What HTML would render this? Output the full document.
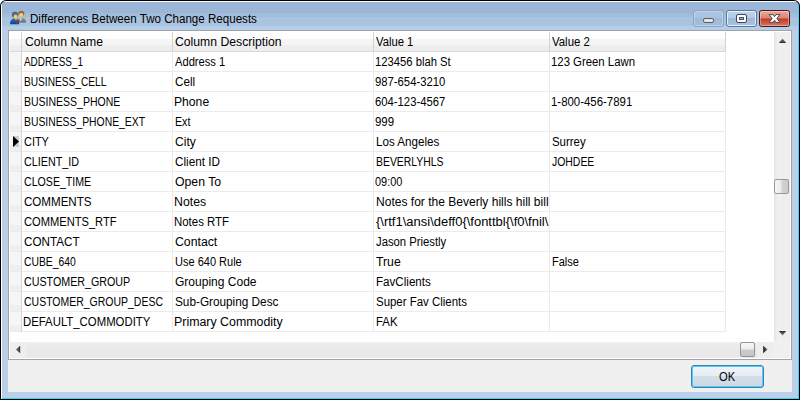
<!DOCTYPE html>
<html><head><meta charset="utf-8"><title>Differences Between Two Change Requests</title>
<style>
html,body{margin:0;padding:0;background:#fff;overflow:hidden}
body{width:800px;height:400px;position:relative;font-family:"Liberation Sans",sans-serif;font-size:12px;color:#000}
div,span,svg{position:absolute;box-sizing:border-box}
#win{left:0;top:0;width:800px;height:400px;background:#000;border-radius:6px 6px 0 0}
#rim{left:1px;top:1px;width:798px;height:398px;border-radius:5px 5px 0 0;background:linear-gradient(90deg,#fff 0,#fff 1px,rgba(255,255,255,0) 1px),linear-gradient(180deg,#fbfdff 0,#fbfdff 1px,rgba(255,255,255,0) 1px),linear-gradient(270deg,#3fd0ff 0,#3fd0ff 1px,rgba(255,255,255,0) 1px),linear-gradient(0deg,#2fd8f4 0,#2fd8f4 1px,rgba(255,255,255,0) 1px),linear-gradient(180deg,#9bb6d6 0,#9bb6d6 12px,#a2bcda 12px,#a2bcda 16px,#aac4e0 16px,#aac4e0 25px,#b4cde8 25px,#b4cde8 29px,#bad0ea 29px)}
#panel{left:8px;top:30px;width:784px;height:362px;background:#f0f0f0}
#grid{left:8px;top:30px;width:784px;height:330px;background:#fff;border:1px solid #a3a3a3}
.c{height:20px;overflow:hidden}
.c span{top:0;line-height:20px;white-space:nowrap;transform-origin:0 50%}
.hdr{left:10px;top:32px;width:716px;height:19px;background:linear-gradient(180deg,#ffffff 0,#fdfdfd 7px,#f5f5f6 7px,#f4f4f5 13px,#eeeeee 13px,#ededed 19px)}
.hline{left:10px;top:51px;width:716px;height:1px;background:#dadada}
.hv{top:32px;width:1px;height:19px;background:#d2d2d2}
.v{top:52px;width:1px;height:280px;background:#ebebeb}
.hl{left:10px;width:716px;height:1px;background:#ebebeb}
.ind{left:10px;width:11px;height:19px;background:linear-gradient(180deg,#f6f6f7 0,#f6f6f7 13px,#efefef 13px)}
</style></head><body>
<div id="win"></div><div id="rim"></div>
<div id="panel"></div>
<div id="grid"></div>
<div class="hdr"></div><div class="hline"></div>
<div class="ind" style="top:52px"></div><div class="hl" style="top:71px"></div>
<div class="ind" style="top:72px"></div><div class="hl" style="top:91px"></div>
<div class="ind" style="top:92px"></div><div class="hl" style="top:111px"></div>
<div class="ind" style="top:112px"></div><div class="hl" style="top:131px"></div>
<div class="ind" style="top:132px"></div><div class="hl" style="top:151px"></div>
<div class="ind" style="top:152px"></div><div class="hl" style="top:171px"></div>
<div class="ind" style="top:172px"></div><div class="hl" style="top:191px"></div>
<div class="ind" style="top:192px"></div><div class="hl" style="top:211px"></div>
<div class="ind" style="top:212px"></div><div class="hl" style="top:231px"></div>
<div class="ind" style="top:232px"></div><div class="hl" style="top:251px"></div>
<div class="ind" style="top:252px"></div><div class="hl" style="top:271px"></div>
<div class="ind" style="top:272px"></div><div class="hl" style="top:291px"></div>
<div class="ind" style="top:292px"></div><div class="hl" style="top:311px"></div>
<div class="ind" style="top:312px"></div><div class="hl" style="top:331px"></div>
<div class="hv" style="left:21px"></div><div class="hv" style="left:172px"></div><div class="hv" style="left:373px"></div><div class="hv" style="left:549px"></div><div class="hv" style="left:725px"></div>
<div class="v" style="left:21px;background:#d6d6d6"></div><div class="v" style="left:172px"></div><div class="v" style="left:373px"></div><div class="v" style="left:549px"></div><div class="v" style="left:725px"></div>
<!-- row indicator arrow -->
<div style="left:13px;top:136px;width:6px;height:11px;background:#cdcdcd"></div>
<svg style="left:13px;top:136px" width="7" height="11" viewBox="0 0 7 11"><path d="M0 0 L6 5.5 L0 11 Z" fill="#000"/></svg>
<!-- vertical scrollbar -->
<div style="left:774px;top:32px;width:16px;height:309px;background:linear-gradient(90deg,#e3e3e3 0,#ededed 2px,#f1f1f1 7px,#ededed 8px,#f0f0f0 14px,#e9e9e9 16px)"></div>
<svg style="left:778px;top:38px" width="9" height="6" viewBox="0 0 9 6"><defs><linearGradient id="ga" x1="0" y1="0" x2="0" y2="1"><stop offset="0" stop-color="#8a8a8a"/><stop offset="1" stop-color="#2a2a2a"/></linearGradient><linearGradient id="gb" x1="0" y1="0" x2="0" y2="1"><stop offset="0" stop-color="#2a2a2a"/><stop offset="1" stop-color="#8a8a8a"/></linearGradient><linearGradient id="gc" x1="0" y1="0" x2="1" y2="0"><stop offset="0" stop-color="#8a8a8a"/><stop offset="1" stop-color="#2a2a2a"/></linearGradient><linearGradient id="gd" x1="0" y1="0" x2="1" y2="0"><stop offset="0" stop-color="#1a1a1a"/><stop offset="1" stop-color="#777"/></linearGradient></defs><path d="M0.8 5 L4.5 0.5 L8.2 5 Z" fill="url(#ga)"/></svg>
<svg style="left:778px;top:330px" width="9" height="6" viewBox="0 0 9 6"><path d="M0.8 1 L4.5 5.4 L8.2 1 Z" fill="url(#gb)"/></svg>
<div style="left:774px;top:179px;width:15px;height:15px;border:1px solid #989898;border-radius:2px;background:linear-gradient(90deg,#f6f6f6 0,#ececec 6px,#d2d2d2 7px,#cbcbcb 13px)"></div>
<!-- horizontal scrollbar -->
<div style="left:10px;top:342px;width:764px;height:16px;background:linear-gradient(180deg,#f1f1f1 0,#ebebeb 3px,#e8e8e8 14px,#ececec 16px)"></div>
<div style="left:10px;top:342px;width:17px;height:16px;background:#eeeeee"></div>
<div style="left:757px;top:342px;width:17px;height:16px;background:#eeeeee"></div>
<div style="left:774px;top:341px;width:16px;height:17px;background:#f0f0f0"></div>
<svg style="left:15px;top:345px" width="6" height="9" viewBox="0 0 6 9"><path d="M5.2 0.8 L0.8 4.5 L5.2 8.2 Z" fill="url(#gc)"/></svg>
<svg style="left:763px;top:345px" width="6" height="9" viewBox="0 0 6 9"><path d="M0.2 0.8 L4.6 4.5 L0.2 8.2 Z" fill="url(#gd)"/></svg>
<div style="left:740px;top:342px;width:15px;height:15px;border:1px solid #8f959b;border-radius:2px;background:linear-gradient(180deg,#f6f6f6 0,#ececec 6px,#cdcdcd 7px,#c4c4c4 13px)"></div>
<!-- OK button -->
<div style="left:691px;top:365px;width:73px;height:23px;border:1px solid #3c7fb1;border-radius:3px;background:linear-gradient(180deg,#eef3f7 0,#e6edf3 10px,#d3dee8 10px,#cbd8e4 21px);box-shadow:inset 0 0 0 1px #4fcdf6"></div>
<!-- caption buttons -->
<div style="left:693px;top:10px;width:31px;height:17px;border:1px solid #8aa6c8;border-radius:3px;background:linear-gradient(180deg,#adc5e2 0,#a9c2e0 7px,#9db8d8 7px,#a5bfdd 15px);box-shadow:inset 0 0 0 1px rgba(255,255,255,.25)"></div>
<div style="left:703px;top:18px;width:11px;height:5px;border:1px solid #5d5d5d;border-radius:2px;background:#e6e6e6"></div>
<div style="left:726px;top:10px;width:31px;height:17px;border:1px solid #58769f;border-radius:3px;background:linear-gradient(180deg,#bdd3ec 0,#b3cbe7 7px,#9cb8d9 7px,#a9c3e1 15px);box-shadow:inset 0 0 0 1px rgba(255,255,255,.7)"></div>
<div style="left:736px;top:14px;width:11px;height:9px;border:1px solid #45455a;border-radius:2px;background:#fbfbfb"></div>
<div style="left:739px;top:17px;width:5px;height:3px;border:1px solid #45556d;background:#8fb2d8"></div>
<div style="left:759px;top:10px;width:31px;height:17px;border:1px solid #4b1622;border-radius:2.5px;background:linear-gradient(180deg,#e9a99a 0,#dc8571 7px,#c13c22 8px,#d4775e 15px);box-shadow:inset 0 0 0 1px rgba(255,255,255,.35)"></div>
<svg style="left:768px;top:13px" width="13" height="11" viewBox="0 0 13 11"><path d="M1.2 1.6 L5 1.6 L6.5 3.7 L8 1.6 L11.8 1.6 L8.9 5.5 L11.8 9.4 L8 9.4 L6.5 7.3 L5 9.4 L1.2 9.4 L4.1 5.5 Z" fill="#fff" stroke="#4a4a55" stroke-width="1" stroke-linejoin="round"/></svg>
<!-- icon -->
<svg style="left:9px;top:10px" width="18" height="16" viewBox="0 0 18 16">
 <defs>
  <linearGradient id="ib" x1="0" y1="0" x2="0" y2="1"><stop offset="0" stop-color="#2f78bd"/><stop offset="1" stop-color="#0f437c"/></linearGradient>
  <linearGradient id="ig" x1="0" y1="0" x2="0" y2="1"><stop offset="0" stop-color="#a3a6aa"/><stop offset="1" stop-color="#5c5f63"/></linearGradient>
  <radialGradient id="if" cx="0.45" cy="0.4" r="0.7"><stop offset="0" stop-color="#ffe08a"/><stop offset="1" stop-color="#e2a23a"/></radialGradient>
 </defs>
 <path d="M9.9 12.6 L9.9 9 C10.8 8.1 12 7.8 13.2 7.8 C15.6 7.8 17 9.4 17 12.6 Z" fill="url(#ig)"/>
 <path d="M11 8 L12.6 8 L12.2 11.2 L11.2 11.2 Z" fill="#b9d6f2"/>
 <ellipse cx="12.3" cy="3.6" rx="3" ry="2.7" fill="#8a6a3e"/>
 <ellipse cx="12.3" cy="5.3" rx="2.2" ry="2.6" fill="url(#if)"/>
 <path d="M9.6 4 C9.8 1.6 11 0.9 12.3 0.9 C13.8 0.9 15 1.8 15.2 4 C14.2 3 13.3 2.8 12.3 2.8 C11.3 2.8 10.5 3 9.6 4 Z" fill="#8a6a3e"/>
 <path d="M1 14.3 C1 11 2.4 8.8 5 8.2 L8.6 8.2 C9.7 9 10.1 11 10.1 14.3 Z" fill="url(#ib)"/>
 <path d="M5.6 8.3 L7.2 10.2 L8.6 8.3 Z" fill="#f4f6f8"/>
 <path d="M7 9.6 L7.6 9.6 L8.1 13.6 L7.5 14.3 L6.9 13.5 Z" fill="#c7281f"/>
 <ellipse cx="6" cy="4.8" rx="3.1" ry="3" fill="#485b7c"/>
 <ellipse cx="6.6" cy="6.8" rx="2.1" ry="2.4" fill="url(#if)"/>
 <path d="M3.6 5.6 C3.6 3.6 5 3 6.2 3 C7.8 3 9 3.8 9 5.6 C8.2 4.6 7.4 4.4 6.4 4.4 C5.4 4.4 4.4 4.6 3.6 5.6 Z" fill="#5d7193"/>
</svg>

<div class="c" style="left:22px;top:32px;width:150px"><span id="h0" style="left:2.93px;transform:scaleX(1.0176)">Column Name</span></div>
<div class="c" style="left:173px;top:32px;width:200px"><span id="h1" style="left:1.88px;transform:scaleX(1.0174)">Column Description</span></div>
<div class="c" style="left:374px;top:32px;width:175px"><span id="h2" style="left:1.92px;transform:scaleX(0.9391)">Value 1</span></div>
<div class="c" style="left:550px;top:32px;width:175px"><span id="h3" style="left:2.46px;transform:scaleX(0.9517)">Value 2</span></div>
<div class="c" style="left:22px;top:52px;width:150px"><span id="r0c0" style="left:2.35px;transform:scaleX(0.8262)">ADDRESS_1</span></div>
<div class="c" style="left:173px;top:52px;width:200px"><span id="r0c1" style="left:2.22px;transform:scaleX(0.9283)">Address 1</span></div>
<div class="c" style="left:374px;top:52px;width:175px"><span id="r0c2" style="left:0.56px;transform:scaleX(0.9375)">123456 blah St</span></div>
<div class="c" style="left:550px;top:52px;width:175px"><span id="r0c3" style="left:0.92px;transform:scaleX(0.9462)">123 Green Lawn</span></div>
<div class="c" style="left:22px;top:72px;width:150px"><span id="r1c0" style="left:2.09px;transform:scaleX(0.8457)">BUSINESS_CELL</span></div>
<div class="c" style="left:173px;top:72px;width:200px"><span id="r1c1" style="left:1.88px;transform:scaleX(0.9757)">Cell</span></div>
<div class="c" style="left:374px;top:72px;width:175px"><span id="r1c2" style="left:1.09px;transform:scaleX(0.9405)">987-654-3210</span></div>
<div class="c" style="left:22px;top:92px;width:150px"><span id="r2c0" style="left:2.18px;transform:scaleX(0.8748)">BUSINESS_PHONE</span></div>
<div class="c" style="left:173px;top:92px;width:200px"><span id="r2c1" style="left:1.20px;transform:scaleX(1.0128)">Phone</span></div>
<div class="c" style="left:374px;top:92px;width:175px"><span id="r2c2" style="left:1.09px;transform:scaleX(0.9405)">604-123-4567</span></div>
<div class="c" style="left:550px;top:92px;width:175px"><span id="r2c3" style="left:0.91px;transform:scaleX(0.9511)">1-800-456-7891</span></div>
<div class="c" style="left:22px;top:112px;width:150px"><span id="r3c0" style="left:2.09px;transform:scaleX(0.8640)">BUSINESS_PHONE_EXT</span></div>
<div class="c" style="left:173px;top:112px;width:200px"><span id="r3c1" style="left:2.14px;transform:scaleX(0.8862)">Ext</span></div>
<div class="c" style="left:374px;top:112px;width:175px"><span id="r3c2" style="left:1.06px;transform:scaleX(0.9529)">999</span></div>
<div class="c" style="left:22px;top:132px;width:150px"><span id="r4c0" style="left:1.90px;transform:scaleX(0.9103)">CITY</span></div>
<div class="c" style="left:173px;top:132px;width:200px"><span id="r4c1" style="left:1.88px;transform:scaleX(1.0086)">City</span></div>
<div class="c" style="left:374px;top:132px;width:175px"><span id="r4c2" style="left:1.63px;transform:scaleX(0.9699)">Los Angeles</span></div>
<div class="c" style="left:550px;top:132px;width:175px"><span id="r4c3" style="left:1.90px;transform:scaleX(0.9509)">Surrey</span></div>
<div class="c" style="left:22px;top:152px;width:150px"><span id="r5c0" style="left:1.90px;transform:scaleX(0.8961)">CLIENT_ID</span></div>
<div class="c" style="left:173px;top:152px;width:200px"><span id="r5c1" style="left:1.89px;transform:scaleX(0.9770)">Client ID</span></div>
<div class="c" style="left:374px;top:152px;width:175px"><span id="r5c2" style="left:1.63px;transform:scaleX(0.8675)">BEVERLYHLS</span></div>
<div class="c" style="left:550px;top:152px;width:175px"><span id="r5c3" style="left:2.01px;transform:scaleX(0.8688)">JOHDEE</span></div>
<div class="c" style="left:22px;top:172px;width:150px"><span id="r6c0" style="left:1.90px;transform:scaleX(0.8837)">CLOSE_TIME</span></div>
<div class="c" style="left:173px;top:172px;width:200px"><span id="r6c1" style="left:1.88px;transform:scaleX(1.0214)">Open To</span></div>
<div class="c" style="left:374px;top:172px;width:175px"><span id="r6c2" style="left:1.10px;transform:scaleX(0.9090)">09:00</span></div>
<div class="c" style="left:22px;top:192px;width:150px"><span id="r7c0" style="left:1.89px;transform:scaleX(0.9645)">COMMENTS</span></div>
<div class="c" style="left:173px;top:192px;width:200px"><span id="r7c1" style="left:1.06px;transform:scaleX(1.0253)">Notes</span></div>
<div class="c" style="left:374px;top:192px;width:175px"><span id="r7c2" style="left:1.62px;transform:scaleX(1.0029)">Notes for the Beverly hills hill bill</span></div>
<div class="c" style="left:22px;top:212px;width:150px"><span id="r8c0" style="left:1.90px;transform:scaleX(0.9276)">COMMENTS_RTF</span></div>
<div class="c" style="left:173px;top:212px;width:200px"><span id="r8c1" style="left:1.17px;transform:scaleX(0.9531)">Notes RTF</span></div>
<div class="c" style="left:374px;top:212px;width:175px"><span id="r8c2" style="left:2.40px;transform:scaleX(1.0820)">{\rtf1\ansi\deff0{\fonttbl{\f0\fnil\</span></div>
<div class="c" style="left:22px;top:232px;width:150px"><span id="r9c0" style="left:1.89px;transform:scaleX(0.9750)">CONTACT</span></div>
<div class="c" style="left:173px;top:232px;width:200px"><span id="r9c1" style="left:1.87px;transform:scaleX(1.0221)">Contact</span></div>
<div class="c" style="left:374px;top:232px;width:175px"><span id="r9c2" style="left:1.98px;transform:scaleX(0.9403)">Jason Priestly</span></div>
<div class="c" style="left:22px;top:252px;width:150px"><span id="r10c0" style="left:1.90px;transform:scaleX(0.8627)">CUBE_640</span></div>
<div class="c" style="left:173px;top:252px;width:200px"><span id="r10c1" style="left:2.07px;transform:scaleX(0.9177)">Use 640 Rule</span></div>
<div class="c" style="left:374px;top:252px;width:175px"><span id="r10c2" style="left:1.92px;transform:scaleX(1.0193)">True</span></div>
<div class="c" style="left:550px;top:252px;width:175px"><span id="r10c3" style="left:1.64px;transform:scaleX(0.9184)">False</span></div>
<div class="c" style="left:22px;top:272px;width:150px"><span id="r11c0" style="left:1.90px;transform:scaleX(0.8916)">CUSTOMER_GROUP</span></div>
<div class="c" style="left:173px;top:272px;width:200px"><span id="r11c1" style="left:1.88px;transform:scaleX(1.0018)">Grouping Code</span></div>
<div class="c" style="left:374px;top:272px;width:175px"><span id="r11c2" style="left:1.58px;transform:scaleX(0.9676)">FavClients</span></div>
<div class="c" style="left:22px;top:292px;width:150px"><span id="r12c0" style="left:1.90px;transform:scaleX(0.8733)">CUSTOMER_GROUP_DESC</span></div>
<div class="c" style="left:173px;top:292px;width:200px"><span id="r12c1" style="left:1.80px;transform:scaleX(0.9814)">Sub-Grouping Desc</span></div>
<div class="c" style="left:374px;top:292px;width:175px"><span id="r12c2" style="left:1.91px;transform:scaleX(0.9529)">Super Fav Clients</span></div>
<div class="c" style="left:22px;top:312px;width:150px"><span id="r13c0" style="left:1.24px;transform:scaleX(0.9469)">DEFAULT_COMMODITY</span></div>
<div class="c" style="left:173px;top:312px;width:200px"><span id="r13c1" style="left:1.19px;transform:scaleX(1.0317)">Primary Commodity</span></div>
<div class="c" style="left:374px;top:312px;width:175px"><span id="r13c2" style="left:1.74px;transform:scaleX(0.9482)">FAK</span></div>
<div class="c" style="left:28px;top:9px;width:662px"><span id="title" style="left:1.93px;transform:scaleX(0.9654)">Differences Between Two Change Requests</span></div>
<div class="c" style="left:692px;top:367px;width:71px"><span id="ok" style="left:26.88px;transform:scaleX(0.9321)">OK</span></div>
</body></html>
